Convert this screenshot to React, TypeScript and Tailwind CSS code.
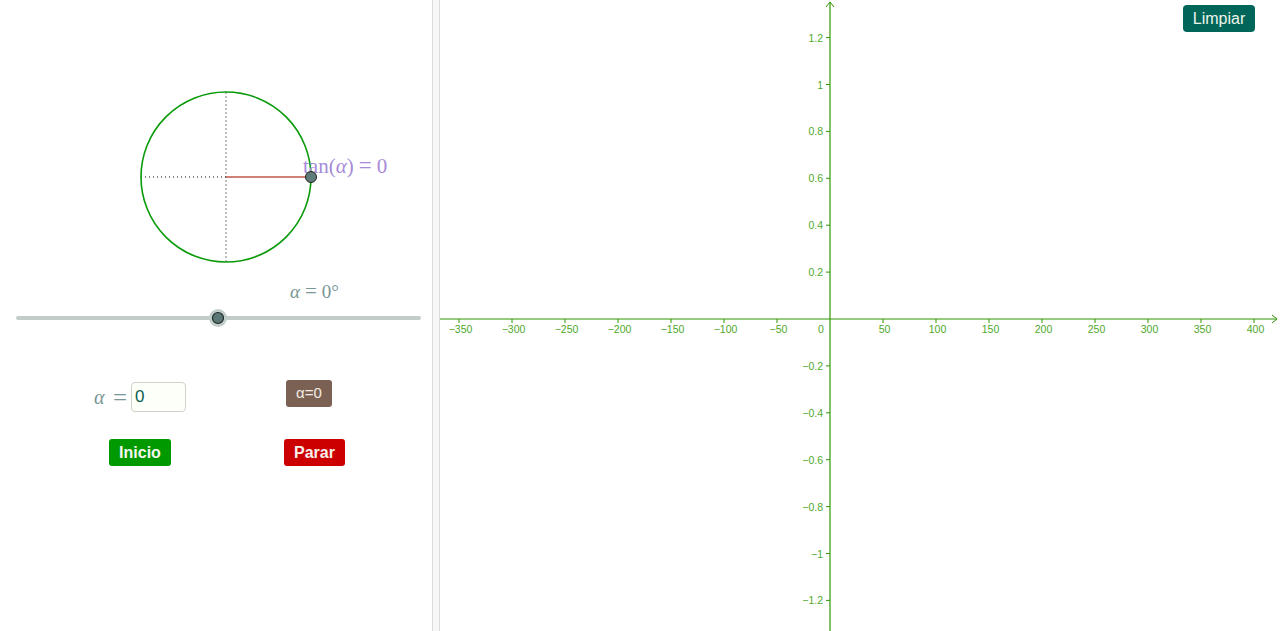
import React from "react";

const AXIS = "#2f9600";
const LABEL = "#50a82c";

function Graph() {
  const ox = 390;
  const oy = 319;
  const xs = [-7, -6, -5, -4, -3, -2, -1, 1, 2, 3, 4, 5, 6, 7, 8];
  const ys = [6, 5, 4, 3, 2, 1, -1, -2, -3, -4, -5, -6];
  const fmtY = (k: number) => {
    const v = Math.round(k * 2) / 10;
    const s = Math.abs(v) === 1 ? "1" : Math.abs(v).toFixed(1);
    return (v < 0 ? "\u2212" : "") + s;
  };
  return (
    <svg width="840" height="631" viewBox="0 0 840 631" className="block">
      <line x1="0" y1={oy} x2="836" y2={oy} stroke={AXIS} strokeWidth="1.2" />
      <polyline points={`832,${oy - 4} 837,${oy} 832,${oy + 4}`} fill="none" stroke={AXIS} strokeWidth="1" />
      <line x1={ox} y1="2" x2={ox} y2="631" stroke={AXIS} strokeWidth="1.2" />
      <polyline points={`${ox - 4},7 ${ox},2 ${ox + 4},7`} fill="none" stroke={AXIS} strokeWidth="1" />
      {xs.map((k) => {
        const x = ox + k * 53;
        const v = k * 50;
        return (
          <g key={"x" + k}>
            <line x1={x} y1={oy} x2={x} y2={oy + 4} stroke={AXIS} strokeWidth="1" />
            <text
              x={x + 1.5}
              y={oy + 14}
              textAnchor="middle"
              fill={LABEL}
              fontSize="10.5"
              fontFamily="'Liberation Sans', Arial, sans-serif"
            >
              {(v < 0 ? "\u2212" : "") + Math.abs(v)}
            </text>
          </g>
        );
      })}
      <text x={ox - 9} y={oy + 14} textAnchor="middle" fill={LABEL} fontSize="10.5" fontFamily="'Liberation Sans', Arial, sans-serif">
        0
      </text>
      {ys.map((k) => {
        const y = oy - k * 46.9;
        return (
          <g key={"y" + k}>
            <line x1={ox - 4} y1={y} x2={ox} y2={y} stroke={AXIS} strokeWidth="1" />
            <text
              x={ox - 7}
              y={y + 4}
              textAnchor="end"
              fill={LABEL}
              fontSize="10.5"
              fontFamily="'Liberation Sans', Arial, sans-serif"
            >
              {fmtY(k)}
            </text>
          </g>
        );
      })}
    </svg>
  );
}

function Drawing() {
  const cx = 226;
  const cy = 177;
  const r = 85;
  return (
    <svg width="432" height="340" viewBox="0 0 432 340" className="block">
      <line x1={cx} y1={cy - r} x2={cx} y2={cy + r} stroke="#a9a9a9" strokeWidth="1.5" strokeDasharray="2 2" />
      <line x1={cx - r} y1={cy} x2={cx} y2={cy} stroke="#111" strokeWidth="1" strokeDasharray="1 3" />
      <line x1={cx} y1={cy} x2={cx + r} y2={cy} stroke="#c0584a" strokeWidth="1.4" />
      <circle cx={cx} cy={cy} r={r} fill="none" stroke="#0a9a0a" strokeWidth="1.6" />
      <text x="303" y="173" fill="#a58bd9" fontSize="21" fontFamily="'Liberation Serif', 'DejaVu Serif', serif">
        <tspan>tan(</tspan>
        <tspan fontStyle="italic">α</tspan>
        <tspan>)</tspan>
        <tspan dx="5" fontSize="23">=</tspan>
        <tspan dx="5">0</tspan>
      </text>
      <circle cx={cx + r} cy={cy} r="5.5" fill="#5f7c7b" stroke="#222" strokeWidth="1" />
      <text x="290" y="298" fill="#7a9595" fontSize="19" fontFamily="'Liberation Serif', 'DejaVu Serif', serif">
        <tspan fontStyle="italic">α</tspan>
        <tspan dx="5" fontSize="21">=</tspan>
        <tspan dx="5">0°</tspan>
      </text>
      <line x1="18" y1="318" x2="419" y2="318" stroke="#c2cdca" strokeWidth="4" strokeLinecap="round" />
      <circle cx="218" cy="318" r="9" fill="#c2cdca" />
      <circle cx="218" cy="318" r="5.5" fill="#5b7775" stroke="#1e2a2a" strokeWidth="1.2" />
    </svg>
  );
}

export default function App() {
  return (
    <div className="flex h-[631px] w-[1280px] overflow-hidden bg-white" style={{ fontFamily: "'Liberation Sans', Arial, sans-serif" }}>
      <div className="flex w-[432px] shrink-0 flex-col">
        <Drawing />
        <div className="mt-[40px] flex h-[32px] items-start">
          <div className="ml-[94px] flex items-center gap-[4px] pt-[2px]">
            <span
              className="flex w-[33px] items-center justify-between leading-none text-[#7a9595]"
              style={{ fontFamily: "'Liberation Serif', 'DejaVu Serif', serif" }}
            >
              <i className="text-[20px]">α</i>
              <span className="text-[25px]">=</span>
            </span>
            <div className="flex h-[30px] w-[55px] items-center rounded-[4px] border border-[#cfd2cc] bg-[#fdfff9] pl-[3px] text-[17px] text-[#0b5e50]">
              0
            </div>
          </div>
          <button className="ml-[100px] flex h-[27px] w-[46px] items-center justify-center rounded-[3px] bg-[#7b6154] text-[15px] text-[#f3ebe4]">
            α=0
          </button>
        </div>
        <div className="mt-[27px] flex">
          <button className="ml-[109px] flex h-[27px] w-[62px] items-center justify-center rounded-[3px] bg-[#009900] text-[16px] font-bold text-[#f7f7ef]">
            Inicio
          </button>
          <button className="ml-[113px] flex h-[27px] w-[61px] items-center justify-center rounded-[3px] bg-[#cc0000] text-[16px] font-bold text-[#f7f1ec]">
            Parar
          </button>
        </div>
      </div>
      <div className="h-full w-[8px] shrink-0 border-x border-[#dcdcdc] bg-[#f7f7f7]" />
      <div className="relative flex-1">
        <Graph />
        <button className="absolute left-[743px] top-[5px] flex h-[27px] w-[72px] items-center justify-center rounded-[4px] bg-[#00665a] text-[16px] text-[#f0f5ea]">
          Limpiar
        </button>
      </div>
    </div>
  );
}
